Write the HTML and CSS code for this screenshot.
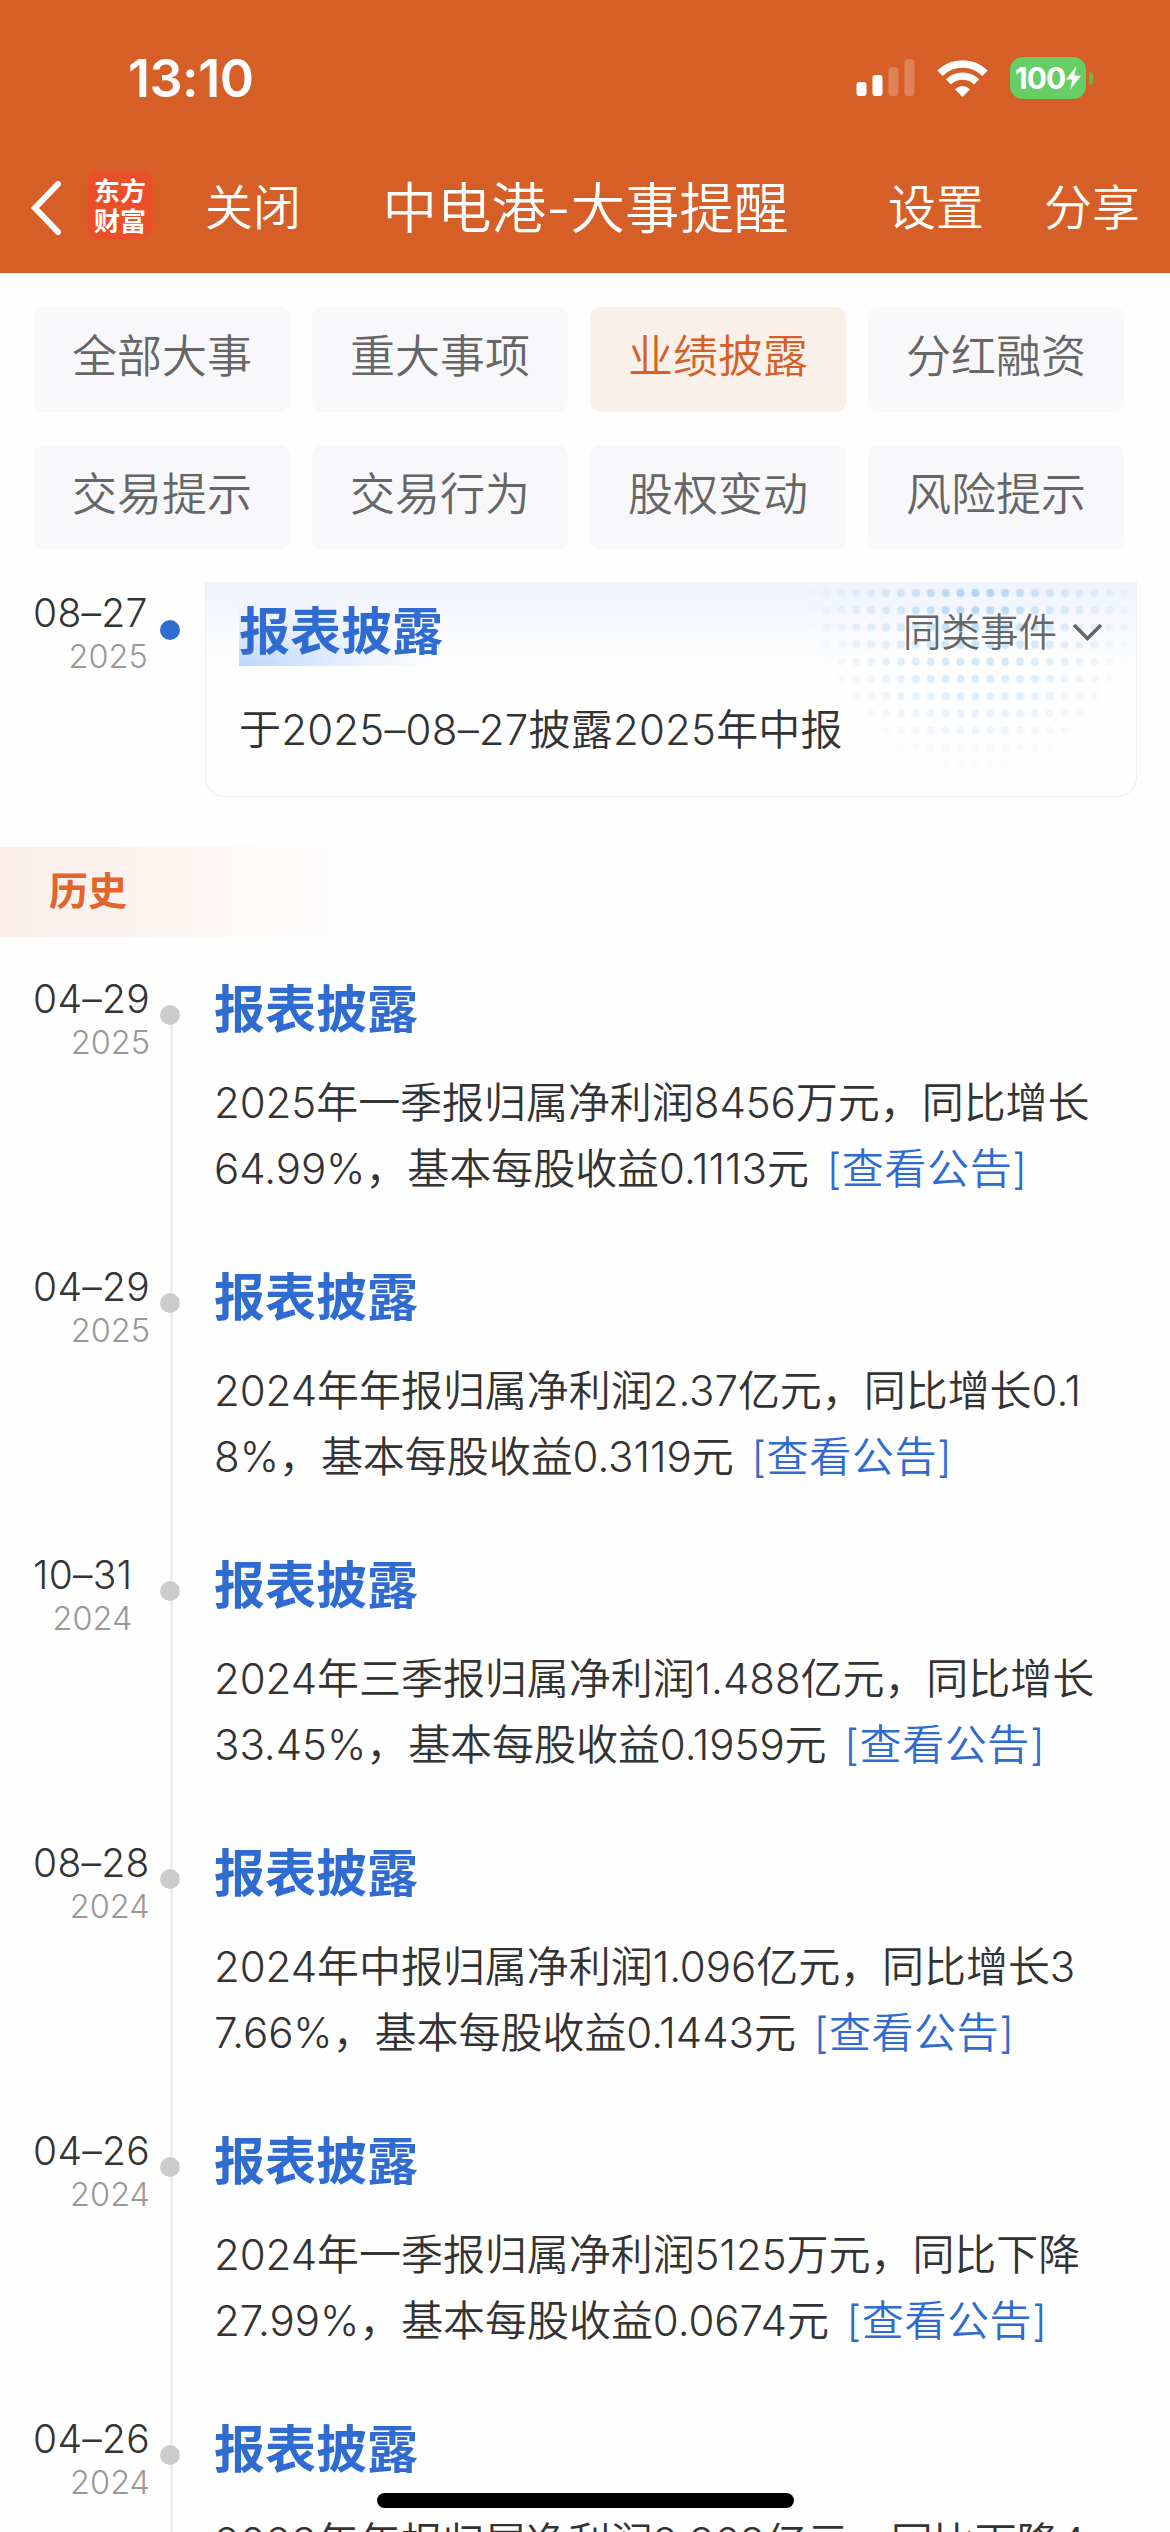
FILE: index.html
```html
<!DOCTYPE html>
<html lang="zh-CN">
<head>
<meta charset="UTF-8" />
<meta name="viewport" content="width=device-width, initial-scale=1" />
<title>中电港-大事提醒</title>
<link rel="stylesheet" href="styles.css">
</head>
<body>

  <header class="header">
    <div class="status">
      <span class="time">13:10</span>
      <div class="status-icons">
        <svg class="signal" width="60" height="38" viewBox="0 0 60 38" fill="#fff">
          <rect x="0.5" y="23" width="10" height="14" rx="3" />
          <rect x="16.5" y="16" width="10" height="21" rx="3" />
          <rect x="32.5" y="8" width="10" height="29" rx="3" opacity="0.22" />
          <rect x="48.5" y="0" width="10" height="37" rx="3" opacity="0.22" />
        </svg>
        <svg class="wifi" width="51" height="37" viewBox="0 0 51 37" fill="none" stroke="#fff">
          <path d="M3 13.2 A32 32 0 0 1 48 13.2" stroke-width="7.6" />
          <path d="M11.5 21.8 A20 20 0 0 1 39.5 21.8" stroke-width="7.4" />
          <path d="M25.5 37 L18 29.3 Q25.5 22.8 33 29.3 Z" fill="#fff" stroke="none" />
        </svg>
        <div class="battery">
          <span>100</span>
          <svg width="15" height="24" viewBox="0 0 15 24" fill="#fff"><path d="M10.5 0 L0 13.5 H6.3 L4 24 L15 9.8 H8.3 Z" /></svg>
        </div>
        <i class="battery-tip"></i>
      </div>
    </div>
    <nav class="nav">
      <svg class="back" width="32" height="54" viewBox="0 0 32 54" fill="none" stroke="#fff" stroke-width="6"><path d="M28 3 L5 27 L28 51" stroke-linecap="round" /></svg>
      <div class="logo"><span>东方</span><span>财富</span></div>
      <span class="nav-btn">关闭</span>
      <h1 class="nav-title">中电港-大事提醒</h1>
      <span class="nav-btn">设置</span>
      <span class="nav-btn share">分享</span>
    </nav>
  </header>

  <div class="tabs">
    <span class="tab">全部大事</span>
    <span class="tab">重大事项</span>
    <span class="tab active">业绩披露</span>
    <span class="tab">分红融资</span>
    <span class="tab">交易提示</span>
    <span class="tab">交易行为</span>
    <span class="tab">股权变动</span>
    <span class="tab">风险提示</span>
  </div>

  <section class="next">
    <div class="date"><b>08–27</b><small>2025</small></div>
    <i class="dot blue"></i>
    <div class="card">
      <svg class="card-dots" width="330" height="200" viewBox="0 0 330 200">
        <defs>
          <pattern id="dots" width="14.9" height="17.2" patternUnits="userSpaceOnUse">
            <circle cx="7.5" cy="11" r="4" fill="#a9d2f3" />
          </pattern>
          <radialGradient id="fade" gradientUnits="userSpaceOnUse" cx="172" cy="0" r="175" gradientTransform="matrix(1 0 0 1.12 0 0)">
            <stop offset="0" stop-color="#fff" />
            <stop offset="0.4" stop-color="#fff" stop-opacity="0.5" />
            <stop offset="1" stop-color="#fff" stop-opacity="0" />
          </radialGradient>
          <mask id="mask"><rect width="330" height="200" fill="url(#fade)" /></mask>
        </defs>
        <rect width="330" height="200" fill="url(#dots)" mask="url(#mask)" />
      </svg>
      <div class="card-head">
        <h2 class="title marked">报表披露</h2>
        <span class="similar">同类事件
          <svg width="31" height="20" viewBox="0 0 31 20" fill="none" stroke="#666" stroke-width="3.6"><path d="M2 3 L15.5 16.5 L29 3" /></svg>
        </span>
      </div>
      <p class="text">于2025–08–27披露2025年中报</p>
    </div>
  </section>

  <div class="history-label">历史</div>

  <section class="timeline">
    <div class="item">
      <div class="date"><b>04–29</b><small>2025</small></div>
      <i class="dot"></i>
      <div class="content">
        <h2 class="title">报表披露</h2>
        <p class="text">2025年一季报归属净利润8456万元，同比增长<br>64.99%，基本每股收益0.1113元 <a>[查看公告]</a></p>
      </div>
    </div>
    <div class="item">
      <div class="date"><b>04–29</b><small>2025</small></div>
      <i class="dot"></i>
      <div class="content">
        <h2 class="title">报表披露</h2>
        <p class="text">2024年年报归属净利润2.37亿元，同比增长0.1<br>8%，基本每股收益0.3119元 <a>[查看公告]</a></p>
      </div>
    </div>
    <div class="item">
      <div class="date"><b>10–31</b><small>2024</small></div>
      <i class="dot"></i>
      <div class="content">
        <h2 class="title">报表披露</h2>
        <p class="text">2024年三季报归属净利润1.488亿元，同比增长<br>33.45%，基本每股收益0.1959元 <a>[查看公告]</a></p>
      </div>
    </div>
    <div class="item">
      <div class="date"><b>08–28</b><small>2024</small></div>
      <i class="dot"></i>
      <div class="content">
        <h2 class="title">报表披露</h2>
        <p class="text">2024年中报归属净利润1.096亿元，同比增长3<br>7.66%，基本每股收益0.1443元 <a>[查看公告]</a></p>
      </div>
    </div>
    <div class="item">
      <div class="date"><b>04–26</b><small>2024</small></div>
      <i class="dot"></i>
      <div class="content">
        <h2 class="title">报表披露</h2>
        <p class="text">2024年一季报归属净利润5125万元，同比下降<br>27.99%，基本每股收益0.0674元 <a>[查看公告]</a></p>
      </div>
    </div>
    <div class="item">
      <div class="date"><b>04–26</b><small>2024</small></div>
      <i class="dot"></i>
      <div class="content">
        <h2 class="title">报表披露</h2>
        <p class="text">2023年年报归属净利润2.368亿元，同比下降4</p>
      </div>
    </div>
  </section>

  <div class="home-bar"></div>

</body>
</html>
```

FILE: styles.css
```css
* {
  box-sizing: border-box;
}
body {
  margin: 0;
  width: 1170px;
  height: 2532px;
  overflow: hidden;
  position: relative;
  background: #fefefe;
  color: #333;
  font-family: Inter, "Noto Sans CJK SC", sans-serif;
  font-weight: 350;
}
h1, h2, p {
  margin: 0;
}
.header {
  height: 273px;
  background: #d65f28;
  color: #fff;
}
.status {
  height: 142px;
  padding: 14px 77px 0 128px;
  display: flex;
  align-items: center;
  justify-content: space-between;
}
.time {
  font-size: 52px;
  font-weight: 600;
  letter-spacing: -0.5px;
}
.status-icons {
  display: flex;
  align-items: center;
}
.wifi {
  margin: 0 22px 0 21px;
}
.battery {
  width: 76px;
  height: 42px;
  border-radius: 13px;
  background: #65cf66;
  display: flex;
  align-items: center;
  justify-content: center;
  gap: 1px;
  font-size: 30px;
  font-weight: 700;
  letter-spacing: -1px;
}
.battery-tip {
  width: 4px;
  height: 13px;
  margin-left: 3px;
  border-radius: 0 5px 5px 0;
  background: #65b94c;
}
.nav {
  height: 131px;
  padding: 0 30px 0 30px;
  display: flex;
  align-items: center;
}
.logo {
  width: 66px;
  height: 68px;
  margin: 0 0 5px 25px;
  border-radius: 12px;
  background: #ea4f2a;
  display: flex;
  flex-direction: column;
  align-items: center;
  justify-content: center;
  font-family: "Noto Sans CJK SC", sans-serif;
  font-size: 26px;
  font-weight: 700;
  line-height: 30px;
}
.nav-btn {
  padding-bottom: 7px;
  font-size: 48px;
}
.logo + .nav-btn {
  margin-left: 52px;
}
.nav-title {
  flex: 1;
  padding: 0 18px 7px 0;
  text-align: center;
  font-size: 54.5px;
  font-weight: 350;
}
.share {
  margin-left: 60px;
}
.tabs {
  padding: 34px 46px 0 34px;
  display: grid;
  grid-template-columns: repeat(4, 256px);
  justify-content: space-between;
  row-gap: 33px;
}
.tab {
  height: 105px;
  border-radius: 10px;
  background: #f8f8fa;
  color: #666;
  font-size: 45px;
  line-height: 99px;
  text-align: center;
}
.tab.active {
  background: #faf0ea;
  color: #d65f28;
}
.next {
  position: relative;
  margin-top: 32px;
  padding: 0 33px 0 33px;
  height: 265px;
  display: flex;
  justify-content: space-between;
  align-items: flex-start;
}
.date {
  display: inline-flex;
  flex-direction: column;
  align-items: flex-end;
  padding-top: 9px;
}
.date b {
  font-size: 39px;
  font-weight: 350;
  line-height: 44px;
  letter-spacing: 0.3px;
}
.date small {
  margin-top: 4px;
  color: #999;
  font-size: 32.5px;
  line-height: 36px;
}
.dot {
  position: absolute;
  left: 160px;
  top: 38px;
  width: 20px;
  height: 20px;
  border-radius: 50%;
  background: #ccc;
}
.dot.blue {
  background: #2f6bd0;
}
.card {
  position: relative;
  width: 932px;
  height: 215px;
  padding: 16px 33px 0;
  border: 1px solid #f0f0f2;
  border-top: none;
  border-radius: 0 0 20px 20px;
  background: linear-gradient(#eff3fc, #fefefe 80px);
}
.card-dots {
  position: absolute;
  right: 2px;
  top: 0;
}
.card-head {
  position: relative;
  display: flex;
  justify-content: space-between;
}
.title {
  color: #2f6bd0;
  font-size: 51px;
  font-weight: 700;
  line-height: 68px;
}
.marked {
  background: radial-gradient(ellipse at 0 100%, #bcd6fb, rgba(225, 236, 253, 0.6) 45%, rgba(255, 255, 255, 0) 70%);
}
.similar {
  display: flex;
  align-items: center;
  gap: 15px;
  color: #666;
  font-size: 38.5px;
  line-height: 66px;
}
.text {
  position: relative;
  font-size: 42px;
  line-height: 66px;
  letter-spacing: -0.05px;
  white-space: nowrap;
}
.card .text {
  margin-top: 31px;
  letter-spacing: 0.2px;
}
.text a {
  margin-left: 6px;
  color: #2f6bd0;
  letter-spacing: 0.6px;
}
.history-label {
  width: 355px;
  height: 90px;
  padding-left: 49px;
  background: linear-gradient(90deg, #fbeee8, #fefefe);
  color: #e2652b;
  font-size: 39px;
  font-weight: 700;
  line-height: 88px;
}
.timeline {
  margin-top: 31px;
}
.item {
  position: relative;
  height: 288px;
  padding-left: 33px;
}
.item::before {
  content: "";
  position: absolute;
  left: 170px;
  top: 0;
  width: 3px;
  height: 288px;
  background: #eee;
}
.item:first-child::before {
  top: 46px;
  height: 242px;
}
.item .date {
  padding-top: 9px;
}
.item .dot {
  top: 37px;
}
.content {
  position: absolute;
  left: 214px;
  top: 8px;
}
.content .text {
  margin-top: 26px;
}
.home-bar {
  position: absolute;
  left: 377px;
  bottom: 24px;
  width: 417px;
  height: 15px;
  border-radius: 8px;
  background: #000;
}
```
